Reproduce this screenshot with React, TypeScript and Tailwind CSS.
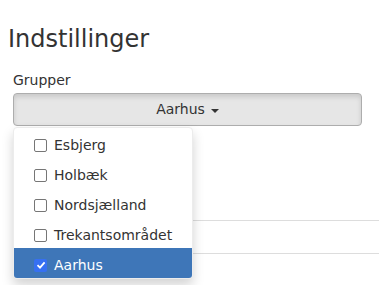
import React from 'react';

const groups = ['Esbjerg', 'Holbæk', 'Nordsjælland', 'Trekantsområdet', 'Aarhus'];
const selected = 'Aarhus';

const App = () => {
	return (
		<div className="relative h-[285px] w-[379px] overflow-hidden bg-white font-['DejaVu_Sans',Verdana,sans-serif] text-[#333]">
			<h1 className="pl-2 pt-[24px] text-[24px] leading-[30px]">Indstillinger</h1>

			<div className="pl-[13px] pt-[16px]">
				<label className="block text-[14px] leading-[20px]">Grupper</label>

				<div className="relative mt-[3px] w-[349px]">
					<button className="flex h-[33px] w-full items-center justify-center gap-[6px] rounded-[4px] border border-[#adadad] bg-[#e6e6e6] text-[14px] shadow-[inset_0_3px_5px_rgba(0,0,0,0.125)]">
						<span>Aarhus</span>
						<span className="mt-[2px] h-0 w-0 border-x-[4px] border-t-[4px] border-x-transparent border-t-[#333]" />
					</button>

					<ul className="absolute left-0 top-[34px] z-10 w-[180px] overflow-hidden rounded-[4px] border border-[#ececec] bg-white shadow-[0_6px_12px_rgba(0,0,0,0.175)]">
						{groups.map((g) => {
							const active = g === selected;
							return (
								<li
									key={g}
									className={
										active
											? 'flex h-[30px] items-center gap-[7px] bg-[#3e76b8] pl-[20px] pt-[4px] text-[14px] text-white'
											: 'flex h-[30px] items-center gap-[7px] pl-[20px] pt-[4px] text-[14px] text-[#333]'
									}
								>
									{active ? (
										<span className="flex h-[13px] w-[13px] items-center justify-center rounded-[2px] bg-[#3670f2]">
											<svg width="10" height="10" viewBox="0 0 10 10">
												<path d="M1.5 5.2 L4 7.6 L8.6 2.4" fill="none" stroke="white" strokeWidth="1.8" />
											</svg>
										</span>
									) : (
										<span className="h-[13px] w-[13px] rounded-[2px] border border-[#767676] bg-white" />
									)}
									<span>{g}</span>
								</li>
							);
						})}
					</ul>
				</div>

				<div className="mt-[94px] w-[400px] border-t border-[#ddd]" />
				<div className="mt-[32px] w-[400px] border-t border-[#ddd]" />
			</div>
		</div>
	);
};

export default App;
